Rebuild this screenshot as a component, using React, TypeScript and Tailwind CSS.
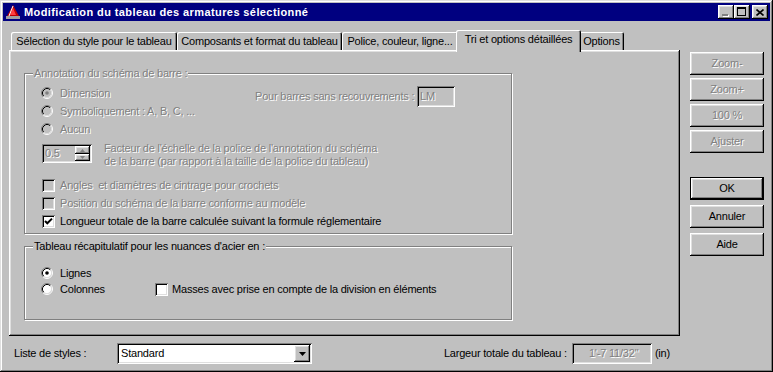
import { ReactNode } from "react";

const raised =
  "shadow-[inset_-1px_-1px_#000,inset_1px_1px_#fff,inset_-2px_-2px_#808080,inset_2px_2px_#dfdfdf]";
const sunken =
  "shadow-[inset_1px_1px_#808080,inset_-1px_-1px_#fff,inset_2px_2px_#000,inset_-2px_-2px_#dfdfdf]";
const etched = "border border-[#808080] shadow-[inset_1px_1px_#fff,1px_1px_#fff]";
const dim = "text-[#808080] [text-shadow:1px_1px_0_#fff]";

const Radio = ({ checked, disabled }: { checked?: boolean; disabled?: boolean }) => (
  <svg width={12} height={12} viewBox="0 0 12 12" className="shrink-0">
    <circle cx={6} cy={6} r={4.5} fill={disabled ? "#c0c0c0" : "#fff"} />
    <path d="M2.11 9.89 A5.5 5.5 0 0 1 9.89 2.11" stroke="#808080" fill="none" />
    <path d="M9.89 2.11 A5.5 5.5 0 0 1 2.11 9.89" stroke="#fff" fill="none" />
    <path d="M2.82 9.18 A4.5 4.5 0 0 1 9.18 2.82" stroke="#000" fill="none" />
    <path d="M9.18 2.82 A4.5 4.5 0 0 1 2.82 9.18" stroke="#dfdfdf" fill="none" />
    {checked && <circle cx={6} cy={6} r={1.8} fill={disabled ? "#808080" : "#000"} />}
  </svg>
);

const Check = ({ checked, disabled }: { checked?: boolean; disabled?: boolean }) => (
  <span
    className={`w-[13px] h-[13px] shrink-0 flex items-center justify-center ${sunken} ${
      disabled ? "bg-[#c0c0c0]" : "bg-white"
    }`}
  >
    {checked && (
      <svg width={9} height={9} viewBox="0 0 9 9">
        <polyline points="1,4 3.3,6.3 8,1.6" stroke="#000" strokeWidth={2} fill="none" />
      </svg>
    )}
  </span>
);

const Btn = ({
  children,
  disabled,
  def,
}: {
  children: ReactNode;
  disabled?: boolean;
  def?: boolean;
}) => (
  <div
    className={`w-[74px] h-[23px] flex items-center justify-center ${
      def ? "border border-black" : ""
    } ${disabled ? dim : "text-black"}`}
  >
    <div className={`w-full h-full flex items-center justify-center ${raised}`}>{children}</div>
  </div>
);

const Tab = ({ w, children }: { w: string; children: ReactNode }) => (
  <div
    className={`${w} h-[18px] flex items-center justify-center rounded-t-[2px] whitespace-nowrap shadow-[inset_1px_1px_#fff,inset_-1px_0_#000,inset_-2px_0_#808080]`}
  >
    {children}
  </div>
);

export default function App() {
  return (
    <div
      className={`w-[773px] h-[372px] bg-[#c0c0c0] p-[3px] flex flex-col text-[11px] leading-[13px] tracking-[-0.2px] text-black font-['Liberation_Sans',Arial,sans-serif] shadow-[inset_-1px_-1px_#000,inset_1px_1px_#dfdfdf,inset_-2px_-2px_#808080,inset_2px_2px_#fff]`}
    >
      {/* Title bar */}
      <div className="h-[18px] bg-[#000080] flex items-center pl-[2px] pr-[2px]">
        <svg width={16} height={16} viewBox="0 0 16 16">
          <polygon points="8,1 15,14 1,14" fill="#c00000" />
          <polygon points="8,4 11,11 5,11" fill="#ff4040" />
          <line x1={8} y1={2} x2={4} y2={12} stroke="#fff" strokeWidth={1} />
          <rect x={1} y={12} width={14} height={3} fill="#a0a0a0" />
        </svg>
        <span className="ml-[3px] text-white font-bold tracking-[0.4px]">
          Modification du tableau des armatures sélectionné
        </span>
        <div className="ml-auto flex items-center">
          <div className={`w-[16px] h-[14px] bg-[#c0c0c0] ${raised} relative`}>
            <span className="absolute left-[4px] top-[9px] w-[6px] h-[2px] bg-[#808080] shadow-[1px_1px_#fff]" />
          </div>
          <div className={`w-[16px] h-[14px] bg-[#c0c0c0] ${raised} flex items-center justify-center`}>
            <span className="w-[9px] h-[9px] border border-black border-t-2 mb-[1px] mr-[1px]" />
          </div>
          <div className={`ml-[2px] w-[16px] h-[14px] bg-[#c0c0c0] ${raised} flex items-center justify-center`}>
            <svg width={8} height={7} viewBox="0 0 8 7" className="mr-[1px]">
              <path d="M0.5 0.5 L7.5 6.5 M7.5 0.5 L0.5 6.5" stroke="#000" strokeWidth={1.6} />
            </svg>
          </div>
        </div>
      </div>

      <div className="flex">
        {/* Left column */}
        <div className="ml-[6px] w-[671px] flex flex-col">
          {/* Tabs */}
          <div className="mt-[9px] h-[20px] pl-[2px] flex items-end">
            <Tab w="w-[166px]">Sélection du style pour le tableau</Tab>
            <Tab w="w-[165px]">Composants et format du tableau</Tab>
            <Tab w="w-[116px]">Police, couleur, ligne...</Tab>
            <div className="relative z-10 -mx-[2px] w-[125px] h-[22px] -mb-[2px] bg-[#c0c0c0] pb-[4px] flex items-center justify-center whitespace-nowrap rounded-t-[2px] shadow-[inset_1px_1px_#fff,inset_-1px_0_#000,inset_-2px_0_#808080]">
              Tri et options détaillées
            </div>
            <Tab w="w-[45px]">Options</Tab>
          </div>

          {/* Panel */}
          <div className={`h-[286px] pl-[15px] pt-[23px] flex flex-col ${raised}`}>
            {/* Group 1 */}
            <div className={`relative w-[488px] h-[161px] ${etched} pl-[16px] pt-[10px]`}>
              <span className={`absolute -top-[7px] left-[8px] px-[1px] bg-[#c0c0c0] ${dim}`}>
                Annotation du schéma de barre :
              </span>
              <div className="flex">
                <div className="w-[214px] flex flex-col">
                  <div className={`h-[18px] flex items-center gap-[7px] ${dim}`}>
                    <Radio checked disabled />
                    Dimension
                  </div>
                  <div className={`h-[18px] flex items-center gap-[7px] ${dim}`}>
                    <Radio disabled />
                    Symboliquement : A, B, C, ...
                  </div>
                  <div className={`h-[18px] flex items-center gap-[7px] ${dim}`}>
                    <Radio disabled />
                    Aucun
                  </div>
                </div>
                <div className="mt-[2px] h-[21px] flex items-center">
                  <span className={`w-[162px] whitespace-nowrap ${dim}`}>
                    Pour barres sans recouvrements :
                  </span>
                  <div className={`w-[38px] h-[21px] ${sunken} pl-[3px] flex items-center ${dim}`}>
                    LM
                  </div>
                </div>
              </div>
              <div className="mt-[6px] flex items-start">
                <div className={`ml-[1px] w-[50px] h-[19px] ${sunken} flex items-center pl-[3px] pr-[2px]`}>
                  <span className={dim}>0.5</span>
                  <div className="ml-auto flex flex-col">
                    <div className={`w-[15px] h-[8px] ${raised} flex items-center justify-center`}>
                      <svg width={5} height={3} viewBox="0 0 5 3">
                        <polygon points="2.5,0 5,3 0,3" fill="#808080" />
                      </svg>
                    </div>
                    <div className={`w-[15px] h-[7px] ${raised} flex items-center justify-center`}>
                      <svg width={5} height={3} viewBox="0 0 5 3">
                        <polygon points="0,0 5,0 2.5,3" fill="#808080" />
                      </svg>
                    </div>
                  </div>
                </div>
                <div className={`ml-[12px] -mt-[2px] ${dim}`}>
                  <div>Facteur de l'échelle de la police de l'annotation du schéma</div>
                  <div>de la barre (par rapport à la taille de la police du tableau)</div>
                </div>
              </div>
              <div className="mt-[8px] flex flex-col">
                <div className={`h-[18px] flex items-center gap-[5px] pl-[1px] ${dim}`}>
                  <Check disabled />
                  Angles &nbsp;et diamètres de cintrage pour crochets
                </div>
                <div className={`h-[18px] flex items-center gap-[5px] pl-[1px] ${dim}`}>
                  <Check disabled />
                  Position du schéma de la barre conforme au modèle
                </div>
                <div className="h-[18px] flex items-center gap-[5px] pl-[1px]">
                  <Check checked />
                  Longueur totale de la barre calculée suivant la formule réglementaire
                </div>
              </div>
            </div>

            {/* Group 2 */}
            <div className={`relative mt-[12px] w-[488px] h-[74px] ${etched} pl-[16px] pt-[18px]`}>
              <span className="absolute -top-[7px] left-[8px] px-[1px] bg-[#c0c0c0]">
                Tableau récapitulatif pour les nuances d'acier en :
              </span>
              <div className="h-[16px] flex items-center gap-[7px]">
                <Radio checked />
                Lignes
              </div>
              <div className="h-[16px] flex items-center">
                <div className="w-[114px] flex items-center gap-[7px]">
                  <Radio />
                  Colonnes
                </div>
                <Check />
                <span className="ml-[4px]">Masses avec prise en compte de la division en éléments</span>
              </div>
            </div>
          </div>

          {/* Bottom row */}
          <div className="mt-[7px] h-[21px] flex items-center">
            <span className="w-[108px] pl-[5px]">Liste de styles :</span>
            <div className={`w-[195px] h-[21px] bg-white ${sunken} flex items-center pl-[4px] pr-[2px]`}>
              Standard
              <div className={`ml-auto w-[16px] h-[17px] bg-[#c0c0c0] ${raised} flex items-center justify-center`}>
                <svg width={7} height={4} viewBox="0 0 7 4">
                  <polygon points="0,0 7,0 3.5,4" fill="#000" />
                </svg>
              </div>
            </div>
            <span className="ml-auto">Largeur totale du tableau :</span>
            <div className={`ml-[5px] w-[80px] h-[21px] ${sunken} flex items-center pl-[17px] ${dim}`}>
              1'-7 11/32"
            </div>
            <span className="ml-[3px] mr-[10px]">(in)</span>
          </div>
        </div>

        {/* Right column */}
        <div className="ml-[10px] mt-[31px] flex flex-col">
          <div className="flex flex-col gap-[3px]">
            <Btn disabled>Zoom-</Btn>
            <Btn disabled>Zoom+</Btn>
            <Btn disabled>100 %</Btn>
            <Btn disabled>Ajuster</Btn>
          </div>
          <div className="mt-[24px] flex flex-col gap-[5px]">
            <Btn def>OK</Btn>
            <Btn>Annuler</Btn>
            <Btn>Aide</Btn>
          </div>
        </div>
      </div>
    </div>
  );
}
